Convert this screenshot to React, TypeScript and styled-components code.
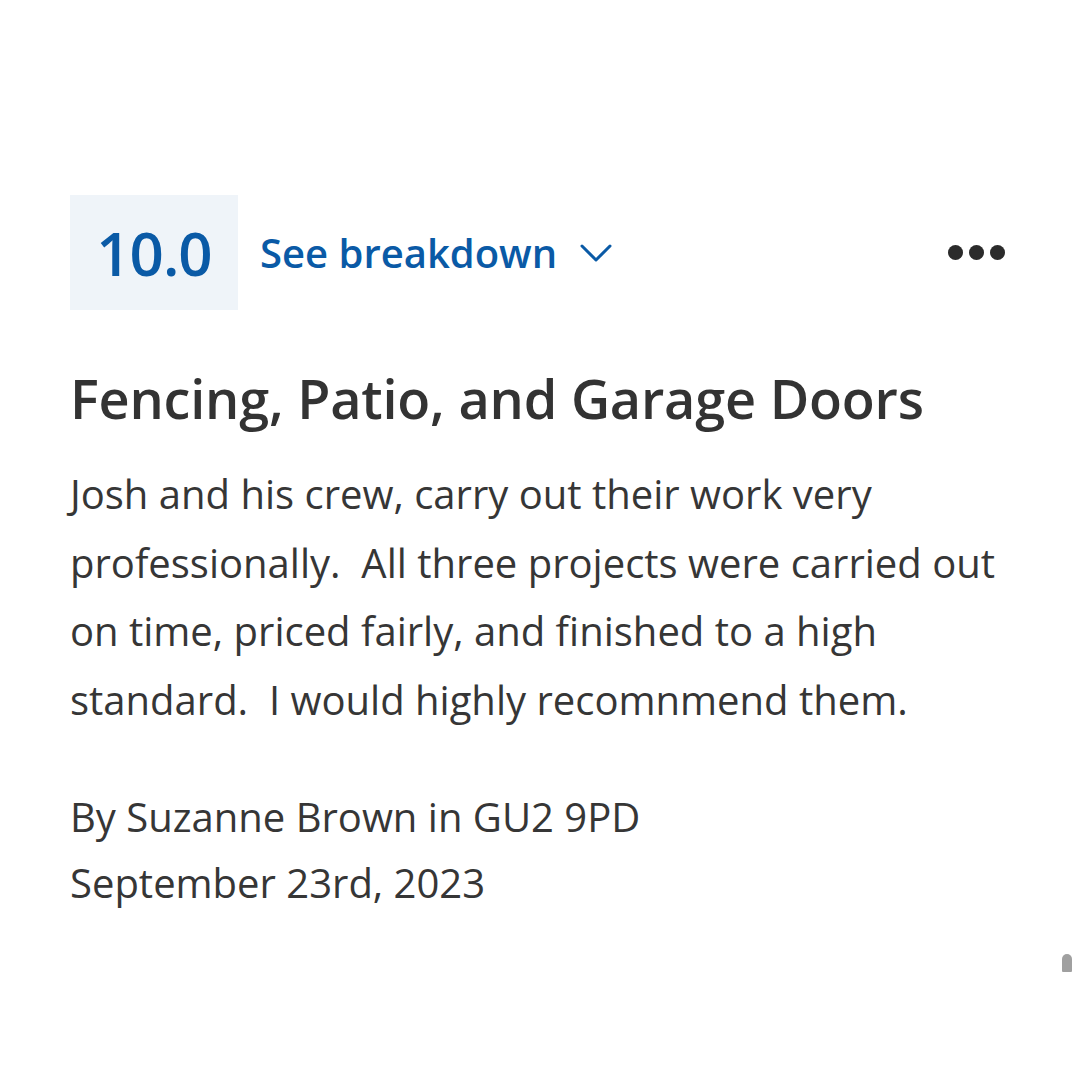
import React from "react";
import styled, { createGlobalStyle } from "styled-components";

const Global = createGlobalStyle`
  html, body { margin: 0; padding: 0; background: #ffffff; }
  body { font-family: "Open Sans", "Noto Sans", sans-serif; }
`;

const Page = styled.div`
  width: 1080px;
  height: 1080px;
  position: relative;
  box-sizing: border-box;
  padding: 195px 40px 0 70px;
`;

const TopRow = styled.div`
  display: flex;
  align-items: center;
  height: 115px;
  padding-right: 35px;
`;

const ScoreBox = styled.div`
  width: 168px;
  height: 115px;
  background: #eff4f9;
  display: flex;
  align-items: center;
  justify-content: center;
  font-size: 60px;
  font-weight: 600;
  color: #0a5aa6;
  letter-spacing: -1px;
`;

const Breakdown = styled.button`
  display: flex;
  align-items: center;
  gap: 23px;
  margin-left: 22px;
  border: 0;
  background: none;
  padding: 0;
  font-family: inherit;
  font-size: 40px;
  font-weight: 600;
  color: #0a5aa6;
  cursor: pointer;
`;

const MoreDots = styled.div`
  margin-left: auto;
  display: flex;
  gap: 6px;
`;

const Dot = styled.span`
  width: 15px;
  height: 15px;
  border-radius: 50%;
  background: #2b2b2b;
`;

const Title = styled.h2`
  margin: 53px 0 0;
  font-size: 54px;
  font-weight: 600;
  color: #333333;
  line-height: 1.3;
  letter-spacing: -0.2px;
`;

const Body = styled.p`
  margin: 27px 0 0;
  font-size: 40px;
  line-height: 68.5px;
  color: #363636;
  white-space: pre-wrap;
`;

const Meta = styled.div`
  margin-top: 49.5px;
  font-size: 40px;
  line-height: 66px;
  color: #363636;
`;

const ScrollThumb = styled.div`
  position: absolute;
  left: 1062px;
  top: 954px;
  width: 10px;
  height: 18px;
  border-radius: 5px 5px 1px 1px;
  background: #a0a0a0;
`;

export default function App() {
  return (
    <Page>
      <Global />
      <TopRow>
        <ScoreBox>10.0</ScoreBox>
        <Breakdown>
          See breakdown
          <svg width="32" height="20" viewBox="0 0 32 20" fill="none">
            <path d="M2 3 L16 17 L30 3" stroke="#0a5aa6" strokeWidth="3" strokeLinecap="round" strokeLinejoin="round" />
          </svg>
        </Breakdown>
        <MoreDots>
          <Dot />
          <Dot />
          <Dot />
        </MoreDots>
      </TopRow>
      <Title>Fencing, Patio, and Garage Doors</Title>
      <Body>
        {"Josh and his crew, carry out their work very\nprofessionally.  All three projects were carried out\non time, priced fairly, and finished to a high\nstandard.  I would highly recomnmend them."}
      </Body>
      <Meta>
        <div>By Suzanne Brown in GU2 9PD</div>
        <div>September 23rd, 2023</div>
      </Meta>
      <ScrollThumb />
    </Page>
  );
}
